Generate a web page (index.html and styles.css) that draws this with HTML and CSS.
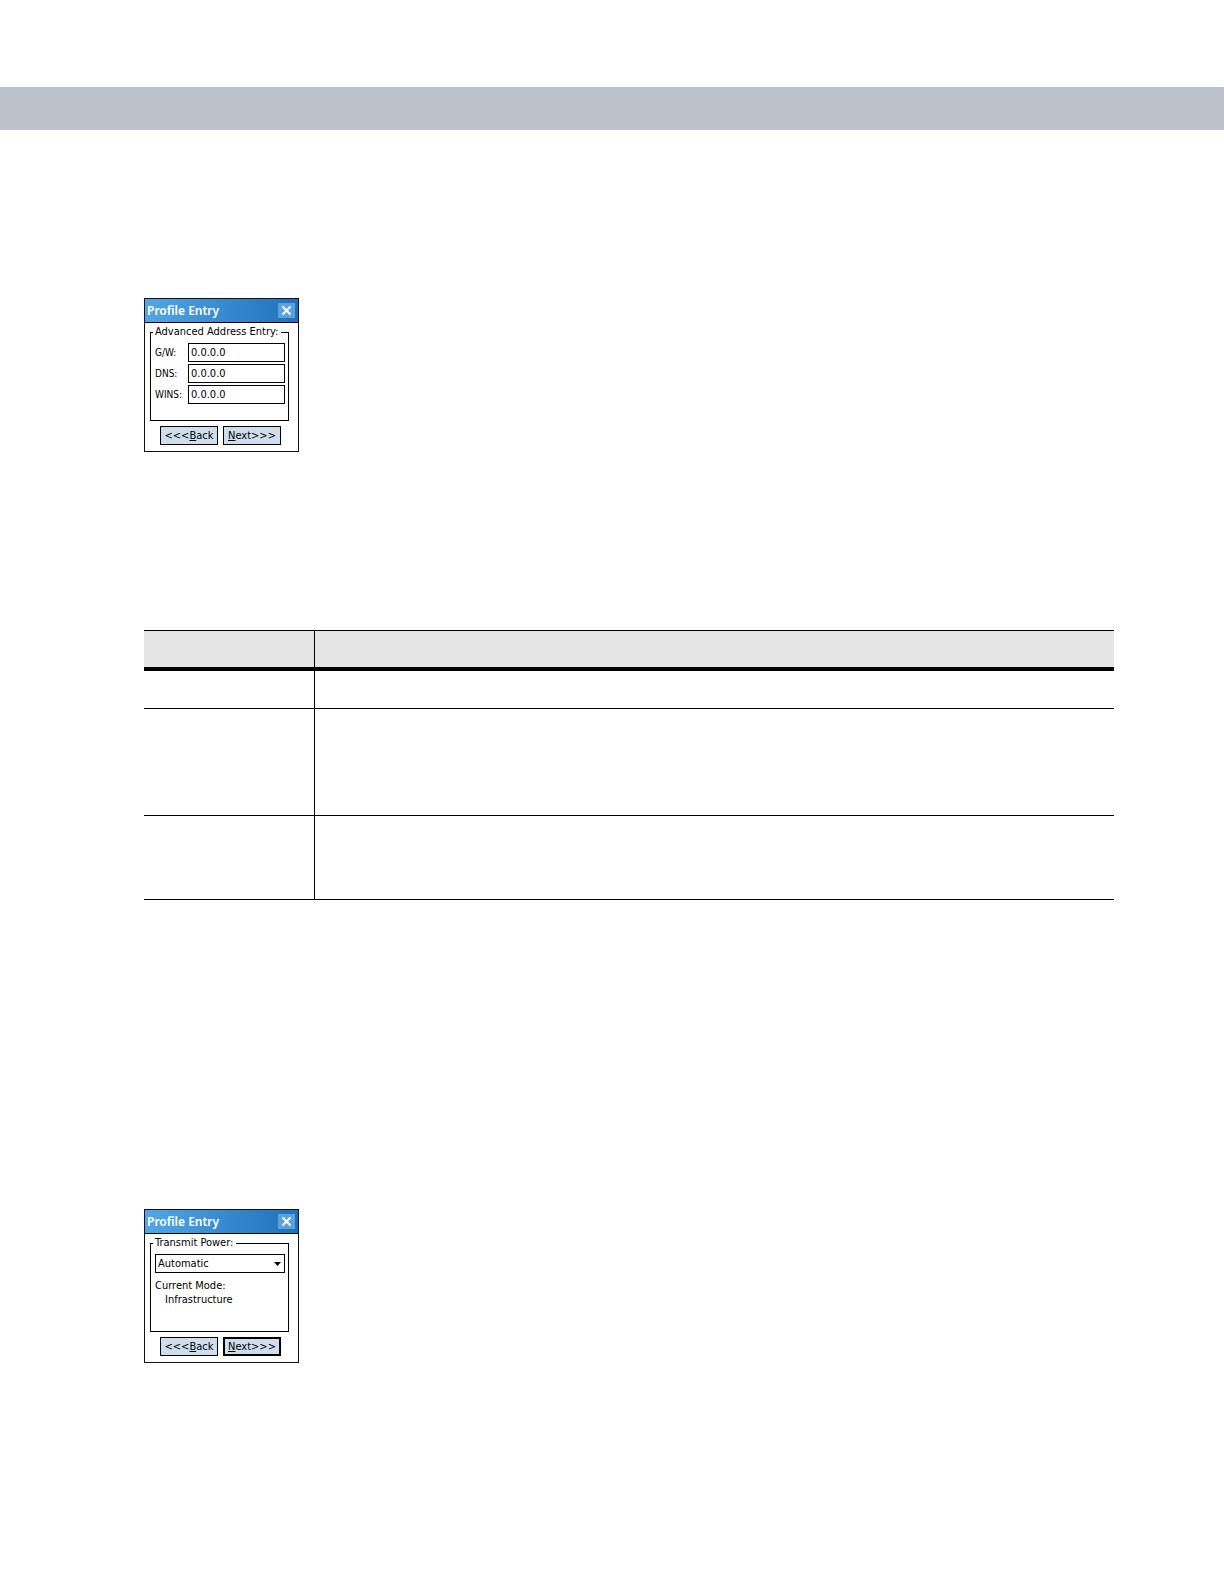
FILE: index.html
```html
<!DOCTYPE html>
<html lang="en">
<head>
    <meta charset="UTF-8">
    <meta name="viewport" content="width=device-width, initial-scale=1.0">
    <title>Profile Entry</title>
    <link rel="stylesheet" href="styles.css">
</head>
<body>

<header class="page-bar"></header>

<main class="content">
    <form class="dialog">
        <div class="dialog-title">
            <h2>Profile Entry</h2>
            <button type="button" class="close" aria-label="Close">
                <svg width="17" height="15" viewBox="0 0 17 15"><path d="M4.5 3.5l8 8M12.5 3.5l-8 8" stroke="#fff" stroke-width="2"/></svg>
            </button>
        </div>
        <div class="dialog-body">
            <fieldset class="group">
                <legend>Advanced Address Entry:</legend>
                <div class="fields">
                    <label for="gw">G/W:</label>
                    <input type="text" id="gw" value="0.0.0.0">
                    <label for="dns">DNS:</label>
                    <input type="text" id="dns" value="0.0.0.0">
                    <label for="wins">WINS:</label>
                    <input type="text" id="wins" value="0.0.0.0">
                </div>
            </fieldset>
            <div class="buttons">
                <button type="button" class="btn">&lt;&lt;&lt;<u>B</u>ack</button>
                <button type="button" class="btn"><u>N</u>ext&gt;&gt;&gt;</button>
            </div>
        </div>
    </form>

    <table class="info-table">
        <thead>
            <tr><th class="name"></th><th></th></tr>
        </thead>
        <tbody>
            <tr class="row-short"><td class="name"></td><td></td></tr>
            <tr class="row-tall"><td class="name"></td><td></td></tr>
            <tr class="row-medium"><td class="name"></td><td></td></tr>
        </tbody>
    </table>

    <form class="dialog">
        <div class="dialog-title">
            <h2>Profile Entry</h2>
            <button type="button" class="close" aria-label="Close">
                <svg width="17" height="15" viewBox="0 0 17 15"><path d="M4.5 3.5l8 8M12.5 3.5l-8 8" stroke="#fff" stroke-width="2"/></svg>
            </button>
        </div>
        <div class="dialog-body">
            <fieldset class="group">
                <legend id="power-label">Transmit Power:</legend>
                <div class="select-box">
                    <select aria-labelledby="power-label">
                        <option>Automatic</option>
                    </select>
                    <svg class="arrow" width="7" height="4" viewBox="0 0 7 4"><path d="M0 0h7L3.5 4z"/></svg>
                </div>
                <p class="mode">Current Mode:</p>
                <p class="mode mode-value">Infrastructure</p>
            </fieldset>
            <div class="buttons">
                <button type="button" class="btn">&lt;&lt;&lt;<u>B</u>ack</button>
                <button type="button" class="btn btn-default"><u>N</u>ext&gt;&gt;&gt;</button>
            </div>
        </div>
    </form>
</main>

</body>
</html>
```
FILE: styles.css
```css
:root {
    --bar-color: #bdc1c9;
    --button-color: #cfdeed;
    --font-family: "DejaVu Sans Condensed", "Noto Sans", sans-serif;
}
* {
    box-sizing: border-box;
}
body {
    font-family: var(--font-family);
    font-size: 11px;
    line-height: 14px;
    background-color: #fff;
    color: #000;
    margin: 0;
    padding: 87px 0 0;
}
.page-bar {
    height: 43px;
    background-color: var(--bar-color);
}
.content {
    padding: 168px 110px 120px 144px;
}

/* dialogs */
.dialog {
    width: 155px;
    border: 1px solid #111;
    background-color: #fff;
}
.dialog-title {
    display: flex;
    align-items: center;
    justify-content: space-between;
    height: 24px;
    padding: 0 3px 0 2px;
    border-bottom: 1px solid #000;
    background: linear-gradient(to right, #52a7e6, #1f70bb);
    color: #fff;
}
.dialog-title h2 {
    margin: 0;
    font-family: "Noto Sans", sans-serif;
    font-size: 12px;
    font-weight: 600;
}
.close {
    width: 17px;
    height: 15px;
    padding: 0;
    border: none;
    background-color: #5aa2dc;
}
.close svg {
    display: block;
    fill: none;
}
.dialog-body {
    padding: 2px 9px 6px 5px;
}
.group {
    min-width: 0;
    min-height: 96px;
    margin: 0;
    padding: 0 3px 0 4px;
    border: 1px solid #000;
}
.group legend {
    margin-left: -2px;
    padding: 0 3px 0 2px;
    white-space: nowrap;
}
.fields {
    display: grid;
    grid-template-columns: 33px 1fr;
    row-gap: 2px;
    align-items: center;
    margin-top: 4px;
}
.fields label {
    font-size: 10px;
    white-space: nowrap;
}
.fields input,
.select-box select {
    width: 100%;
    height: 19px;
    padding: 0 2px;
    border: 1px solid #000;
    border-radius: 0;
    background-color: #fff;
    color: #000;
    font: inherit;
}
.select-box {
    position: relative;
    margin: 4px 0 6px;
}
.select-box select {
    display: block;
    appearance: none;
}
.arrow {
    position: absolute;
    top: 8px;
    right: 4px;
    pointer-events: none;
}
.mode {
    margin: 0;
}
.mode-value {
    padding-left: 10px;
}
.buttons {
    display: flex;
    justify-content: center;
    gap: 5px;
    padding-left: 2px;
    margin-top: 5px;
}
.btn {
    width: 58px;
    height: 19px;
    padding: 0;
    border: 1px solid #000;
    background-color: var(--button-color);
    color: #000;
    font: inherit;
    white-space: nowrap;
}
.btn-default {
    border-width: 2px;
}

/* table */
.info-table {
    width: 100%;
    margin: 178px 0 309px;
    border-spacing: 0;
    table-layout: fixed;
}
.info-table th,
.info-table td {
    padding: 0;
    border-bottom: 1px solid #000;
}
.info-table th {
    height: 41px;
    border-top: 1px solid #000;
    border-bottom: 4px solid #000;
    background-color: #e5e5e5;
}
.info-table .name {
    width: 171px;
    border-right: 1px solid #000;
}
.row-short td {
    height: 38px;
}
.row-tall td {
    height: 107px;
}
.row-medium td {
    height: 84px;
}
```
